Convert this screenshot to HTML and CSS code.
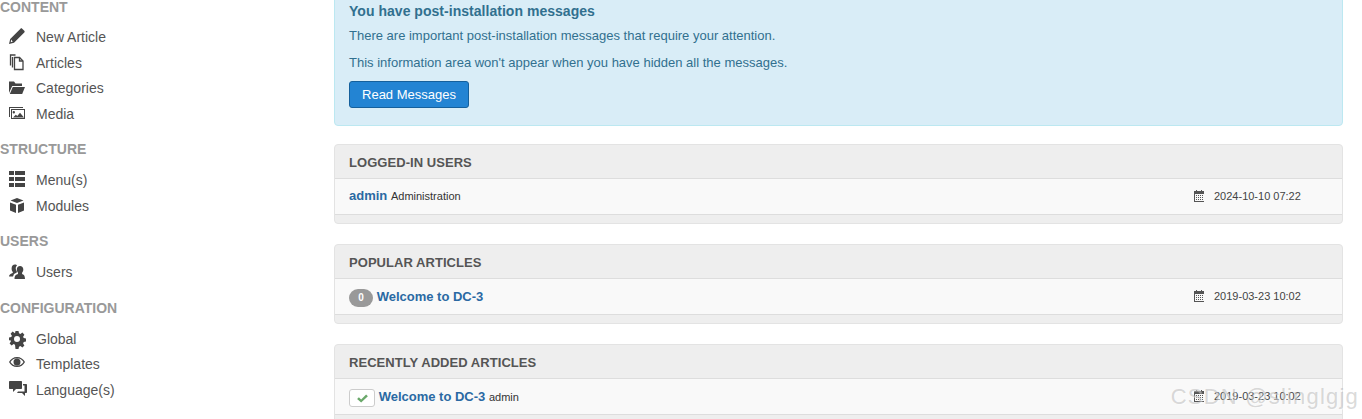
FILE: index.html
```html
<!DOCTYPE html>
<html lang="en">
<head>
    <meta charset="UTF-8">
    <meta name="viewport" content="width=device-width, initial-scale=1.0">
    <title>Control Panel</title>
    <link rel="stylesheet" href="styles.css">
</head>
<body>

<div class="page">
    <nav class="sidebar">
        <h3 class="nav-title">Content</h3>
        <ul class="nav-list">
            <li><span class="nav-icon"><svg viewBox="0 0 16 16"><path d="M0 16l1.200-5L11.500.7c.5-.5 1.200-.5 1.700 0l2.100 2.100c.5.500.5 1.200 0 1.700L5 14.800 0 16zM2.300 11.600L1.700 14.300l2 -.5z"/></svg></span>New Article</li>
            <li><span class="nav-icon"><svg class="ico-line" viewBox="0 0 16 16"><path d="M6.500 1H1.500v10.500M3.500 3v10.500M5.500 3.500h5l3.500 3.500v8.500H5.500z"/><path d="M10.500 3.500V7H14"/></svg></span>Articles</li>
            <li><span class="nav-icon"><svg viewBox="0 -1 16 16"><path d="M0 1.500h5L6.500 3.500H13V6H3.200L0 13V1.500zM3.800 7H16l-2.800 7H.8z"/></svg></span>Categories</li>
            <li><span class="nav-icon"><svg viewBox="0 -2 16 16"><path fill-rule="evenodd" d="M0 0h14v1H1v9H0V0zM2 2h14v10H2V2zm1 1v8h12V3H3zm1.800 1a1.200 1.200 0 1 1 0 2.400 1.200 1.200 0 0 1 0-2.400zM4 10.500l2.800-2.800 1.500 1.300 2.700-3.200 4 4.700H4z"/></svg></span>Media</li>
        </ul>
        <h3 class="nav-title">Structure</h3>
        <ul class="nav-list">
            <li><span class="nav-icon"><svg viewBox="0 0 16 16"><path d="M0 0h5v4H0zM6 0h10v4H6zM0 6h5v4H0zM6 6h10v4H6zM0 12h5v4H0zM6 12h10v4H6z"/></svg></span>Menu(s)</li>
            <li><span class="nav-icon"><svg viewBox="0 -1 16 16"><path d="M8 0l6.500 2.500L8 5 1.500 2.500zM1 4.500l6 2.300V15l-6-2.500zM15 4.500L9 6.800V15l6-2.500z"/></svg></span>Modules</li>
        </ul>
        <h3 class="nav-title">Users</h3>
        <ul class="nav-list">
            <li><span class="nav-icon"><svg viewBox="0 -1.500 16 16"><path d="M6 0c1 0 1.600.4 2 1-1 .8-1.400 2-1.200 3.400.1 1 .5 1.800 1 2.400v1.100L5 9.500 4 12H0c0-2 2-2.800 3.800-3.500v-1C3 6.800 2.600 5.500 2.600 4 2.600 1.500 4 0 6 0zM11 1.500c2 0 3.300 1.400 3.300 3.500 0 1.300-.5 2.500-1.200 3.200v1.200c1.300.5 2.900 1.100 2.900 5.100H5.500c0-4 2-4.700 3.500-5.100V8.200C8.300 7.500 7.800 6.300 7.800 5c0-2.100 1.300-3.500 3.200-3.500z"/></svg></span>Users</li>
        </ul>
        <h3 class="nav-title">Configuration</h3>
        <ul class="nav-list">
            <li><span class="nav-icon"><svg viewBox="0 -1 16 16"><path fill-rule="evenodd" d="M6.500 0h3l.5 2.300 1.400.6 2-1.300 2 2.100-1.300 2 .6 1.400 2.300.4v3l-2.300.5-.6 1.400 1.300 2-2 2-2-1.300-1.400.6-.5 2.300h-3L6 13.700l-1.400-.6-2 1.300-2-2 1.300-2-.6-1.400L0 9.500v-3l2.300-.4.6-1.400-1.300-2 2-2.100 2 1.300L6 2.300zM8 5a3 3 0 1 0 0 6 3 3 0 0 0 0-6z"/></svg></span>Global</li>
            <li><span class="nav-icon"><svg viewBox="0 0 16 16"><path fill-rule="evenodd" d="M8 2c3.500 0 6.500 2 8 5-1.500 3-4.500 5-8 5s-6.500-2-8-5c1.500-3 4.500-5 8-5zM8 3.300C5.200 3.300 2.800 4.800 1.500 7c1.300 2.200 3.700 3.700 6.500 3.700s5.200-1.500 6.500-3.700C13.200 4.800 10.800 3.300 8 3.300zM8 3.500a3.500 3.500 0 1 1 0 7 3.500 3.500 0 0 1 0-7z"/></svg></span>Templates</li>
            <li><span class="nav-icon"><svg viewBox="0 0 16 16"><path d="M1 0h11c.6 0 1 .4 1 1v6c0 .6-.4 1-1 1H7l-3 3V8H1C.4 8 0 7.600 0 7V1C0 .4.400 0 1 0zM14 3h3c.6 0 1 .4 1 1v7c0 .6-.4 1-1 1h-1v3l-3-3H8l1-1.500h6.500V4.500H14z"/></svg></span>Language(s)</li>
        </ul>
    </nav>

    <main class="content">
        <div class="alert">
            <h4>You have post-installation messages</h4>
            <p>There are important post-installation messages that require your attention.</p>
            <p>This information area won't appear when you have hidden all the messages.</p>
            <button class="btn-primary">Read Messages</button>
        </div>

        <section class="panel">
            <h2 class="panel-head">Logged-in Users</h2>
            <div class="panel-row">
                <div class="row-main"><a class="name-link" href="#">admin</a> <small>Administration</small></div>
                <div class="row-date"><svg class="cal-icon" viewBox="0 0 12 12"><path fill-rule="evenodd" d="M1 1h2V0h1v1h4V0h1v1h2v11H1V1zm1 3v7h9V4H2zm1 1h1v1H3zm2 0h1v1H5zm2 0h1v1H7zm2 0h1v1H9zM3 7h1v1H3zm2 0h1v1H5zm2 0h1v1H7zm2 0h1v1H9zM3 9h1v1H3zm2 0h1v1H5zm2 0h1v1H7zm2 0h1v1H9z"/></svg>2024-10-10 07:22</div>
            </div>
        </section>

        <section class="panel">
            <h2 class="panel-head">Popular Articles</h2>
            <div class="panel-row">
                <div class="row-main"><span class="badge">0</span> <a class="name-link" href="#">Welcome to DC-3</a></div>
                <div class="row-date"><svg class="cal-icon" viewBox="0 0 12 12"><path fill-rule="evenodd" d="M1 1h2V0h1v1h4V0h1v1h2v11H1V1zm1 3v7h9V4H2zm1 1h1v1H3zm2 0h1v1H5zm2 0h1v1H7zm2 0h1v1H9zM3 7h1v1H3zm2 0h1v1H5zm2 0h1v1H7zm2 0h1v1H9zM3 9h1v1H3zm2 0h1v1H5zm2 0h1v1H7zm2 0h1v1H9z"/></svg>2019-03-23 10:02</div>
            </div>
        </section>

        <section class="panel">
            <h2 class="panel-head">Recently Added Articles</h2>
            <div class="panel-row">
                <div class="row-main"><span class="status-btn"><svg viewBox="0 0 12 10"><path d="M0 5.500l2-2L4.500 6 10 .5l2 2L4.500 9.500z"/></svg></span> <a class="name-link" href="#">Welcome to DC-3</a> <small>admin</small></div>
                <div class="row-date"><svg class="cal-icon" viewBox="0 0 12 12"><path fill-rule="evenodd" d="M1 1h2V0h1v1h4V0h1v1h2v11H1V1zm1 3v7h9V4H2zm1 1h1v1H3zm2 0h1v1H5zm2 0h1v1H7zm2 0h1v1H9zM3 7h1v1H3zm2 0h1v1H5zm2 0h1v1H7zm2 0h1v1H9zM3 9h1v1H3zm2 0h1v1H5zm2 0h1v1H7zm2 0h1v1H9z"/></svg>2019-03-23 10:02</div>
            </div>
        </section>
    </main>
</div>

<div class="watermark">CSDN @slinglgjg</div>

</body>
</html>
```

FILE: styles.css
```css
html, body {
    height: 100%;
    overflow: hidden;
}
body {
    margin: 0;
    background-color: #fff;
    font-family: 'Liberation Sans', Arial, sans-serif;
    font-size: 13px;
    color: #333;
}
.page {
    display: flex;
    margin-top: -10px;
    padding-right: 19px;
}

/* left menu */
.sidebar {
    width: 334px;
    flex: none;
}
.nav-title {
    margin: 9px 0 10.2px;
    font-size: 14px;
    line-height: 16px;
    font-weight: bold;
    color: #999;
    text-transform: uppercase;
}
.nav-title:first-child {
    margin-bottom: 9.2px;
}
.nav-list {
    list-style: none;
    margin: 0 0 14.5px;
    padding: 0;
}
.nav-list li {
    display: flex;
    align-items: center;
    height: 25.67px;
    font-size: 14px;
    color: #555;
}
.nav-icon {
    width: 36px;
    padding-left: 9px;
    box-sizing: border-box;
    flex: none;
    display: flex;
    margin-top: -2px;
}
.nav-icon svg {
    width: 16px;
    height: 16px;
    fill: #444;
    overflow: visible;
}
.nav-icon .ico-line {
    fill: none;
    stroke: #444;
    stroke-width: 1.3;
}

/* main column */
.content {
    flex: 1;
}
.alert {
    background-color: #d9edf7;
    border: 1px solid #bce8f1;
    border-radius: 4px;
    color: #31708f;
    padding: 11px 14px 17px;
    margin-bottom: 18px;
}
.alert h4 {
    margin: 0 0 7px;
    font-size: 14px;
    letter-spacing: 0.03px;
    line-height: 18px;
}
.alert p {
    margin: 0 0 9px;
    line-height: 18px;
}
.btn-primary {
    display: block;
    height: 27px;
    width: 120px;
    margin-top: 9px;
    background-color: #2384d3;
    border: 1px solid #15609c;
    border-radius: 3px;
    color: #fff;
    font-family: inherit;
    font-size: 13px;
    padding: 0;
}
.panel {
    background-color: #eee;
    border: 1px solid #e3e3e3;
    border-radius: 4px;
    padding-bottom: 8px;
    margin-bottom: 20px;
}
.panel-head {
    margin: 0;
    padding: 0 14px;
    height: 33px;
    font-size: 13px;
    letter-spacing: 0.05px;
    line-height: 35px;
    font-weight: bold;
    color: #555;
    text-transform: uppercase;
}
.panel-row {
    display: flex;
    justify-content: space-between;
    height: 35px;
    padding: 0 14px;
    background-color: #f9f9f9;
    border-top: 1px solid #ddd;
    border-bottom: 1px solid #ddd;
}
.row-main {
    margin-top: 9px;
    line-height: 16px;
}
.name-link {
    color: #2a69a3;
    font-weight: bold;
    text-decoration: none;
}
small {
    font-size: 11px;
}
.row-date {
    width: 135px;
    font-size: 11px;
    color: #444;
    display: flex;
    align-items: center;
    padding-bottom: 2px;
    box-sizing: border-box;
}
.cal-icon {
    width: 12px;
    height: 12px;
    margin-right: 9px;
    fill: #555;
}
.badge {
    display: inline-block;
    min-width: 24px;
    box-sizing: border-box;
    margin-top: 1px;
    text-align: center;
    background-color: #999;
    color: #fff;
    border-radius: 9px;
    font-size: 10px;
    font-weight: bold;
    line-height: 18px;
}
.status-btn {
    display: inline-flex;
    align-items: center;
    justify-content: center;
    box-sizing: border-box;
    width: 26px;
    height: 18px;
    margin-top: 1px;
    background-color: #fff;
    border: 1px solid #ccc;
    border-radius: 3px;
    vertical-align: middle;
}
.status-btn svg {
    width: 11px;
    height: 9px;
    fill: #6aa86a;
}

.watermark {
    position: absolute;
    right: 3px;
    top: 384px;
    font-size: 22px;
    letter-spacing: 1.2px;
    color: rgba(160, 160, 160, 0.4);
    text-shadow: 1px 1px 1px rgba(255, 255, 255, 0.5);
}
```
